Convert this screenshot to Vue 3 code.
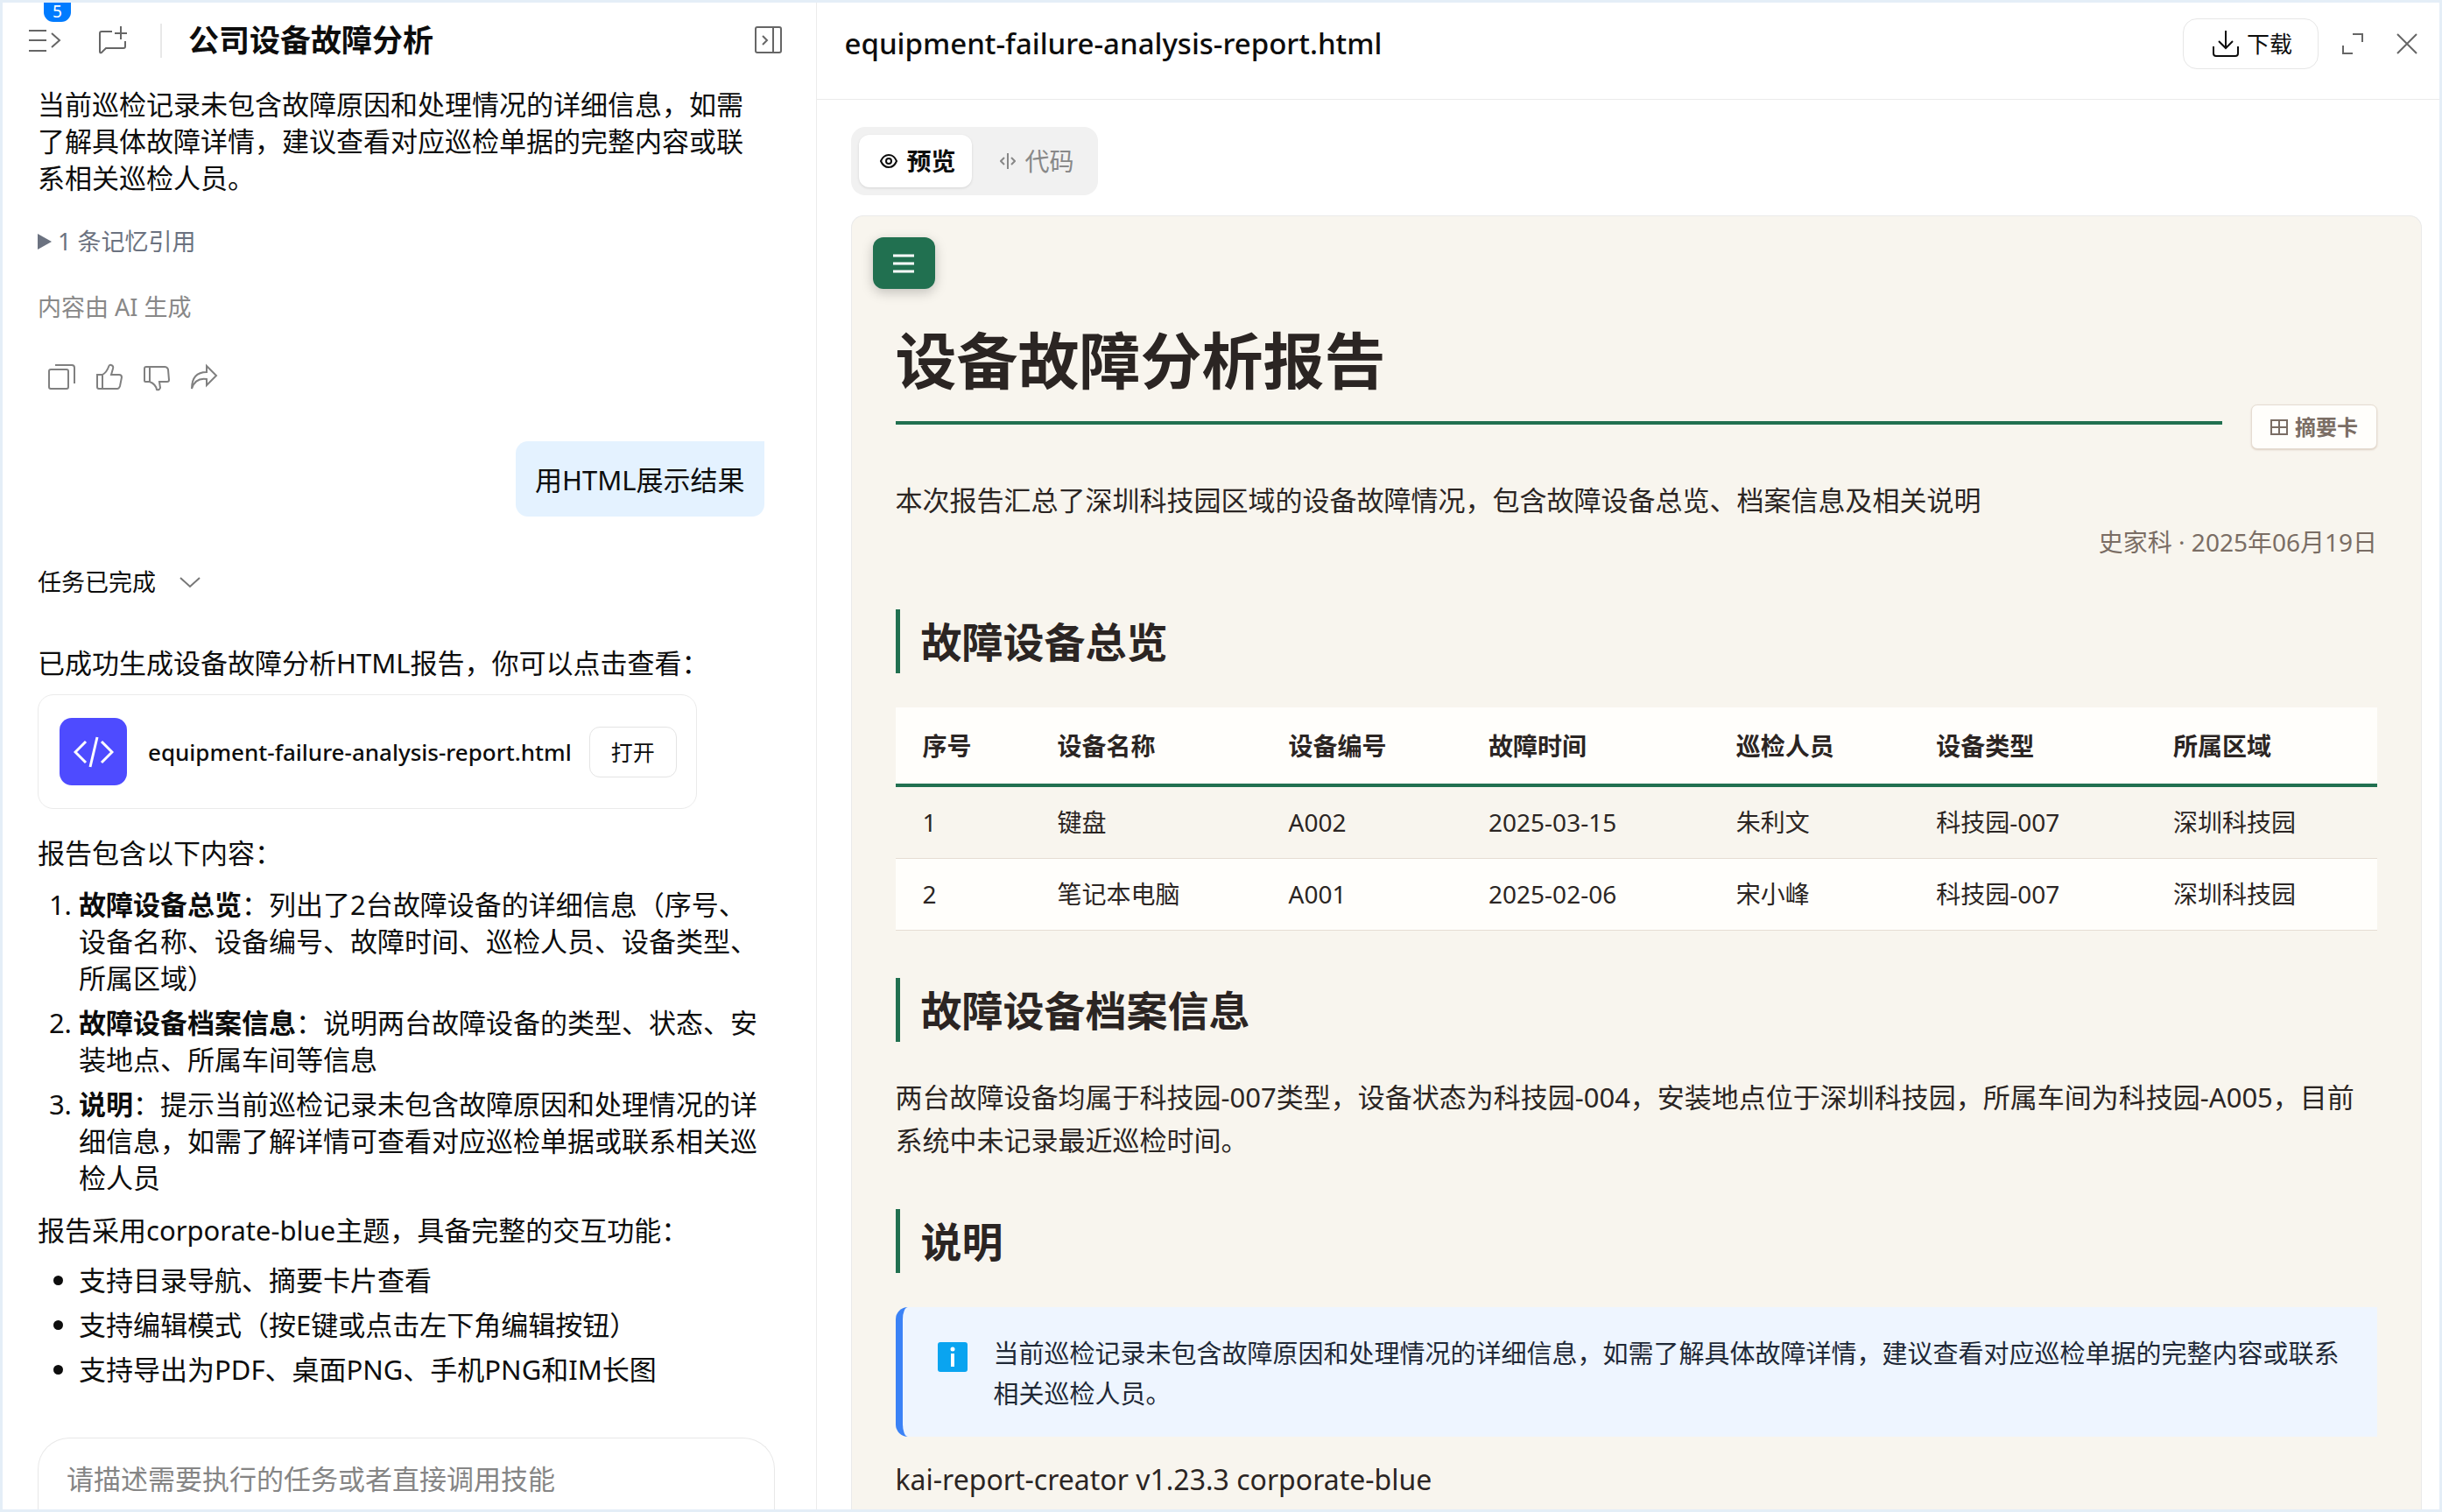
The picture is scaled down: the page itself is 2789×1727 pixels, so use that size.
<script setup>
const contents = [
  { title: '故障设备总览', text: '：列出了2台故障设备的详细信息（序号、设备名称、设备编号、故障时间、巡检人员、设备类型、所属区域）' },
  { title: '故障设备档案信息', text: '：说明两台故障设备的类型、状态、安装地点、所属车间等信息' },
  { title: '说明', text: '：提示当前巡检记录未包含故障原因和处理情况的详细信息，如需了解详情可查看对应巡检单据或联系相关巡检人员' },
]
const features = [
  '支持目录导航、摘要卡片查看',
  '支持编辑模式（按E键或点击左下角编辑按钮）',
  '支持导出为PDF、桌面PNG、手机PNG和IM长图',
]
const columns = ['序号', '设备名称', '设备编号', '故障时间', '巡检人员', '设备类型', '所属区域']
const rows = [
  ['1', '键盘', 'A002', '2025-03-15', '朱利文', '科技园-007', '深圳科技园'],
  ['2', '笔记本电脑', 'A001', '2025-02-06', '宋小峰', '科技园-007', '深圳科技园'],
]
</script>

<template>
  <div class="app">
    <section class="chat">
      <header class="chat-head">
        <button class="icon-btn menu" type="button" aria-label="展开列表">
          <svg width="38" height="34" viewBox="0 0 38 34"><path d="M1 6h20M1 17h20M1 29h20M27 9l9 8-9 8" /></svg>
          <span class="badge">5</span>
        </button>
        <button class="icon-btn new" type="button" aria-label="新建对话">
          <svg width="34" height="34" viewBox="0 0 34 34"><path d="M16 7H4Q2 7 2 9v21q0 2 2 1l5-5h20q2 0 2-2v-6M26 1v15M19 9h14" /></svg>
        </button>
        <span class="rule"></span>
        <h1>公司设备故障分析</h1>
        <button class="icon-btn" type="button" aria-label="收起面板">
          <svg width="32" height="34" viewBox="0 0 32 34"><rect x="1" y="2" width="29" height="29" rx="2" /><path d="M21 2v29M9 12l5 5-5 5" /></svg>
        </button>
      </header>

      <div class="messages">
        <p>当前巡检记录未包含故障原因和处理情况的详细信息，如需了解具体故障详情，建议查看对应巡检单据的完整内容或联系相关巡检人员。</p>
        <button class="memory" type="button">
          <svg width="16" height="18" viewBox="0 0 16 18"><path d="M0 0l16 9-16 9z" /></svg>
          <span>1 条记忆引用</span>
        </button>
        <p class="note">内容由 AI 生成</p>
        <div class="actions">
          <button class="icon-btn" type="button" aria-label="复制">
            <svg width="32" height="32" viewBox="0 0 32 32"><rect x="1" y="7" width="22" height="22" rx="2" /><path d="M8 2h19q3 0 3 3v18" /></svg>
          </button>
          <button class="icon-btn" type="button" aria-label="赞">
            <svg width="32" height="32" viewBox="0 0 32 32"><path d="M2 13h6v16H4q-2 0-2-2V13zM8 13q5-3 7-9 1-3 3-2 3 1 2 4l-2 7h9q3 0 3 3l-2 10q-1 3-3 3H8" /></svg>
          </button>
          <button class="icon-btn" type="button" aria-label="踩">
            <svg width="32" height="32" viewBox="0 0 32 32"><path d="M2 20V6q0-2 2-2h4v17H3q-1 0-1-1zM8 4h17q3 0 4 3l1 12q0 2-2 2h-9l1 7q-1 3-4 2-1-6-8-9" /></svg>
          </button>
          <button class="icon-btn" type="button" aria-label="分享">
            <svg width="32" height="32" viewBox="0 0 32 32"><path d="M19 3l11 11-11 11v-7Q6 16 2 29q0-19 17-19z" /></svg>
          </button>
        </div>

        <div class="bubble">用HTML展示结果</div>

        <button class="status" type="button">
          <span>任务已完成</span>
          <svg width="26" height="14" viewBox="0 0 26 14"><path d="M2 2l11 10L24 2" /></svg>
        </button>
        <p>已成功生成设备故障分析HTML报告，你可以点击查看：</p>
        <div class="file">
          <span class="file-icon">
            <svg width="46" height="38" viewBox="0 0 46 38"><path d="M14 7L2 19l12 12M32 7l12 12-12 12M27 2l-8 34" /></svg>
          </span>
          <span class="file-name">equipment-failure-analysis-report.html</span>
          <button class="open" type="button">打开</button>
        </div>
        <p class="lead">报告包含以下内容：</p>
        <ol>
          <li v-for="c in contents" :key="c.title"><strong>{{ c.title }}</strong>{{ c.text }}</li>
        </ol>
        <p class="theme">报告采用corporate-blue主题，具备完整的交互功能：</p>
        <ul>
          <li v-for="f in features" :key="f">{{ f }}</li>
        </ul>
      </div>

      <div class="composer">
        <input type="text" aria-label="任务描述" placeholder="请描述需要执行的任务或者直接调用技能" />
      </div>
    </section>

    <section class="viewer">
      <header class="viewer-head">
        <h2>equipment-failure-analysis-report.html</h2>
        <button class="download" type="button">
          <svg width="32" height="32" viewBox="0 0 32 32"><path d="M16 1v20M8 13l8 8 8-8M2 19v8q0 3 3 3h22q3 0 3-3v-8" /></svg>
          <span>下载</span>
        </button>
        <button class="icon-btn expand" type="button" aria-label="全屏">
          <svg width="26" height="26" viewBox="0 0 26 26"><path d="M13 2h11v9M2 15v9h11" /></svg>
        </button>
        <button class="icon-btn close" type="button" aria-label="关闭">
          <svg width="26" height="26" viewBox="0 0 26 26"><path d="M2 2l22 22M24 2L2 24" /></svg>
        </button>
      </header>

      <div class="viewer-body">
        <div class="tabs">
          <button class="tab active" type="button">
            <svg width="20" height="16" viewBox="0 0 20 16"><path d="M1 8q3-7 9-7t9 7q-3 7-9 7T1 8z" /><circle cx="10" cy="8" r="3" /></svg>
            <span>预览</span>
          </button>
          <button class="tab" type="button">
            <svg width="18" height="18" viewBox="0 0 18 18"><path d="M5 5L1 9l4 4M13 5l4 4-4 4M9 0v18" /></svg>
            <span>代码</span>
          </button>
        </div>

        <article class="preview">
          <button class="toc" type="button" aria-label="目录">
            <svg width="24" height="24" viewBox="0 0 24 24"><path d="M0 3h24M0 12h24M0 21h24" /></svg>
          </button>
          <div class="report">
            <div class="title-row">
              <h1>设备故障分析报告</h1>
              <button class="summary" type="button">
                <svg width="20" height="18" viewBox="0 0 20 18"><path d="M1 1h18v16H1zM10 1v16M1 9h18" /></svg>
                <span>摘要卡</span>
              </button>
            </div>
            <p class="intro">本次报告汇总了深圳科技园区域的设备故障情况，包含故障设备总览、档案信息及相关说明</p>
            <p class="meta">史家科 · 2025年06月19日</p>

            <h2>故障设备总览</h2>
            <table>
              <colgroup>
                <col class="c1" /><col class="c2" /><col class="c3" /><col class="c4" /><col class="c3" /><col class="c5" /><col />
              </colgroup>
              <thead>
                <tr><th v-for="c in columns" :key="c" scope="col">{{ c }}</th></tr>
              </thead>
              <tbody>
                <tr v-for="r in rows" :key="r[0]">
                  <td v-for="(v, i) in r" :key="i">{{ v }}</td>
                </tr>
              </tbody>
            </table>

            <h2>故障设备档案信息</h2>
            <p>两台故障设备均属于科技园-007类型，设备状态为科技园-004，安装地点位于深圳科技园，所属车间为科技园-A005，目前系统中未记录最近巡检时间。</p>

            <h2>说明</h2>
            <div class="callout">
              <svg width="34" height="34" viewBox="0 0 34 34"><rect width="34" height="34" rx="3" fill="#0aa4f0" /><path d="M17 13v15" stroke="#fff" stroke-width="4" /><circle cx="17" cy="8" r="2.5" fill="#fff" /></svg>
              <p>当前巡检记录未包含故障原因和处理情况的详细信息，如需了解具体故障详情，建议查看对应巡检单据的完整内容或联系相关巡检人员。</p>
            </div>
            <p class="generator">kai-report-creator v1.23.3 corporate-blue</p>
          </div>
        </article>
      </div>
    </section>
  </div>
</template>

<style>
body {
  background: #e4eef7;
}
</style>

<style scoped>
* {
  box-sizing: border-box;
}
.app {
  display: flex;
  height: 100vh;
  padding: 3px;
  overflow: hidden;
  background: #e4eef7;
  color: #0d0d0d;
  font-family: "Noto Sans", "Noto Sans CJK SC", sans-serif;
  font-size: 31px;
  line-height: 42px;
}
h1, h2, p, ol, ul {
  margin: 0;
}
button {
  display: flex;
  align-items: center;
  margin: 0;
  padding: 0;
  border: 0;
  background: none;
  color: inherit;
  font: inherit;
  cursor: pointer;
}
svg {
  display: block;
  flex: none;
}
button svg, .file-icon svg {
  fill: none;
  stroke: currentColor;
  stroke-width: 2;
}
.icon-btn {
  color: #666;
}

/* chat column */
.chat {
  display: flex;
  flex-direction: column;
  width: 33.4%;
  border-right: 1px solid #ececec;
  background: #fff;
}
.chat-head {
  display: flex;
  flex: none;
  align-items: center;
  height: 86px;
  padding: 0 38px 0 29px;
}
.menu {
  position: relative;
}
.badge {
  position: absolute;
  top: -26px;
  left: 18px;
  width: 31px;
  height: 22px;
  border-radius: 0 0 11px 11px;
  background: #007bff;
  color: #fff;
  font-size: 19px;
  line-height: 20px;
  text-align: center;
}
.new {
  margin-left: 42px;
}
.rule {
  width: 2px;
  height: 39px;
  margin: 0 30px 0 37px;
  background: #e8e8e8;
}
.chat-head h1 {
  flex: 1;
  font-size: 35px;
  font-weight: 700;
}
.messages {
  display: flex;
  flex: 1;
  flex-direction: column;
  align-items: flex-start;
  min-height: 0;
  padding: 9px 59px 0 40px;
  overflow: hidden;
}
.memory {
  gap: 7px;
  margin-top: 34px;
  color: #6b7280;
  font-size: 27px;
  line-height: 36px;
}
.memory svg {
  fill: currentColor;
  stroke: none;
}
.note {
  margin-top: 39px;
  color: #888;
  font-size: 27px;
  line-height: 36px;
}
.actions {
  display: flex;
  gap: 22px;
  margin: 46px 0 57px 12px;
}
.actions .icon-btn {
  color: #808080;
}
.bubble {
  align-self: flex-end;
  padding: 23px 22px 21px;
  border-radius: 14px 0 14px 14px;
  background: #e4f2ff;
}
.status {
  gap: 26px;
  margin: 57px 0 53px;
  font-size: 27px;
  line-height: 36px;
}
.status svg {
  color: #777;
}
.file {
  display: flex;
  align-items: center;
  margin-top: 15px;
  padding: 26px 22px 26px 24px;
  border: 1px solid #ebebeb;
  border-radius: 18px;
}
.file-icon {
  display: grid;
  place-items: center;
  width: 77px;
  height: 77px;
  border-radius: 14px;
  background: #4e4bff;
  color: #fff;
}
.file-icon svg {
  stroke-width: 3;
}
.file-name {
  margin: 0 20px 0 24px;
  font-size: 26px;
  font-weight: 500;
}
.open {
  height: 58px;
  padding: 0 24px;
  border: 1px solid #e4e4e4;
  border-radius: 12px;
  font-size: 25px;
}
.lead {
  margin-top: 29px;
}
.messages ol, .messages ul {
  display: flex;
  flex-direction: column;
  gap: 9px;
  padding-left: 47px;
}
.messages ol {
  margin-top: 17px;
}
.theme {
  margin-top: 18px;
}
.messages ul {
  margin-top: 15px;
}
.composer {
  flex: none;
  height: 82px;
  margin: 0 47px 0 40px;
  padding: 25px 32px 0;
  border: 1px solid #e8e8e8;
  border-bottom: 0;
  border-radius: 36px 36px 0 0;
}
.composer input {
  width: 100%;
  padding: 0;
  border: 0;
  outline: 0;
  background: none;
  color: inherit;
  font: inherit;
}
.composer input::placeholder {
  color: #858585;
}

/* file viewer */
.viewer {
  display: flex;
  flex: 1;
  flex-direction: column;
  min-width: 0;
  background: #fff;
}
.viewer-head {
  display: flex;
  flex: none;
  align-items: center;
  height: 111px;
  padding: 0 24px 17px 32px;
  border-bottom: 1px solid #ebebeb;
}
.viewer-head h2 {
  flex: 1;
  font-size: 33px;
  font-weight: 500;
}
.download {
  gap: 8px;
  height: 58px;
  padding: 0 29px 0 32px;
  border: 1px solid #e6e6e6;
  border-radius: 16px;
  font-size: 26px;
}
.expand {
  margin: 0 36px 0 26px;
}
.viewer-body {
  display: flex;
  flex: 1;
  flex-direction: column;
  align-items: flex-start;
  min-height: 0;
  padding: 31px 20px 0 39px;
}
.tabs {
  display: flex;
  flex: none;
  padding: 9px;
  border-radius: 16px;
  background: #f1f1f1;
}
.tab {
  gap: 11px;
  height: 60px;
  padding: 0 18px 0 32px;
  color: #888;
  font-size: 28px;
}
.tab.active {
  padding: 0 18px 0 24px;
  border-radius: 12px;
  background: #fff;
  box-shadow: 0 1px 3px rgba(0, 0, 0, 0.12);
  color: #0d0d0d;
  font-weight: 700;
}
.preview {
  flex: 1;
  width: 100%;
  min-height: 0;
  margin-top: 23px;
  padding: 24px 50px 0;
  overflow: hidden;
  border: 1px solid #eaeaea;
  border-bottom: 0;
  border-radius: 14px 14px 0 0;
  background: #f8f5ee;
  color: #2b2523;
}
.toc {
  justify-content: center;
  width: 71px;
  height: 59px;
  margin-left: -26px;
  border-radius: 12px;
  background: #217050;
  box-shadow: 0 4px 14px rgba(0, 0, 0, 0.22);
  color: #fff;
}
.toc svg {
  stroke-width: 3;
}
.report p {
  line-height: 49px;
}
.title-row {
  display: flex;
  align-items: flex-end;
  gap: 33px;
  margin-top: 40px;
}
.title-row h1 {
  flex: 1;
  margin-bottom: 28px;
  padding-bottom: 27px;
  border-bottom: 4px solid #217050;
  font-size: 70px;
  font-weight: 700;
  line-height: 84px;
}
.summary {
  gap: 8px;
  height: 51px;
  padding: 0 21px;
  border: 1px solid #e5dcd2;
  border-radius: 7px;
  background: #fffefb;
  box-shadow: 0 1px 2px rgba(160, 120, 90, 0.3);
  color: #7a6d64;
  font-size: 24px;
  font-weight: 700;
}
.report .intro {
  margin-top: 34px;
}
.report .meta {
  color: #7a6d64;
  font-size: 28px;
  line-height: 46px;
  text-align: right;
}
.report h2 {
  margin: 54px 0 39px;
  padding: 2px 0 0 24px;
  border-left: 5px solid #217050;
  font-size: 47px;
  font-weight: 700;
  line-height: 71px;
}
table {
  width: 100%;
  border-collapse: separate;
  border-spacing: 0;
  table-layout: fixed;
  font-size: 28px;
}
.c1 { width: 9.1%; }
.c2 { width: 15.6%; }
.c3 { width: 13.5%; }
.c4 { width: 16.7%; }
.c5 { width: 16%; }
th, td {
  padding: 0 31px;
  text-align: left;
}
th {
  height: 91px;
  border-bottom: 4px solid #217050;
  background: #fffefb;
  font-weight: 700;
}
td {
  height: 82px;
  padding-bottom: 2px;
  border-bottom: 1px solid #e6ddd3;
}
tbody tr:nth-child(even) td {
  background: #fffefb;
}
.callout {
  display: flex;
  gap: 30px;
  padding: 30px 38px 26px 40px;
  border-left: 8px solid #3b82f6;
  border-radius: 14px 0 0 14px;
  background: #eef5ff;
  color: #1f2937;
  font-size: 29px;
}
.callout svg {
  margin-top: 10px;
}
.report .callout p {
  line-height: 46px;
}
.report .generator {
  margin-top: 24px;
  font-size: 32px;
}
</style>
